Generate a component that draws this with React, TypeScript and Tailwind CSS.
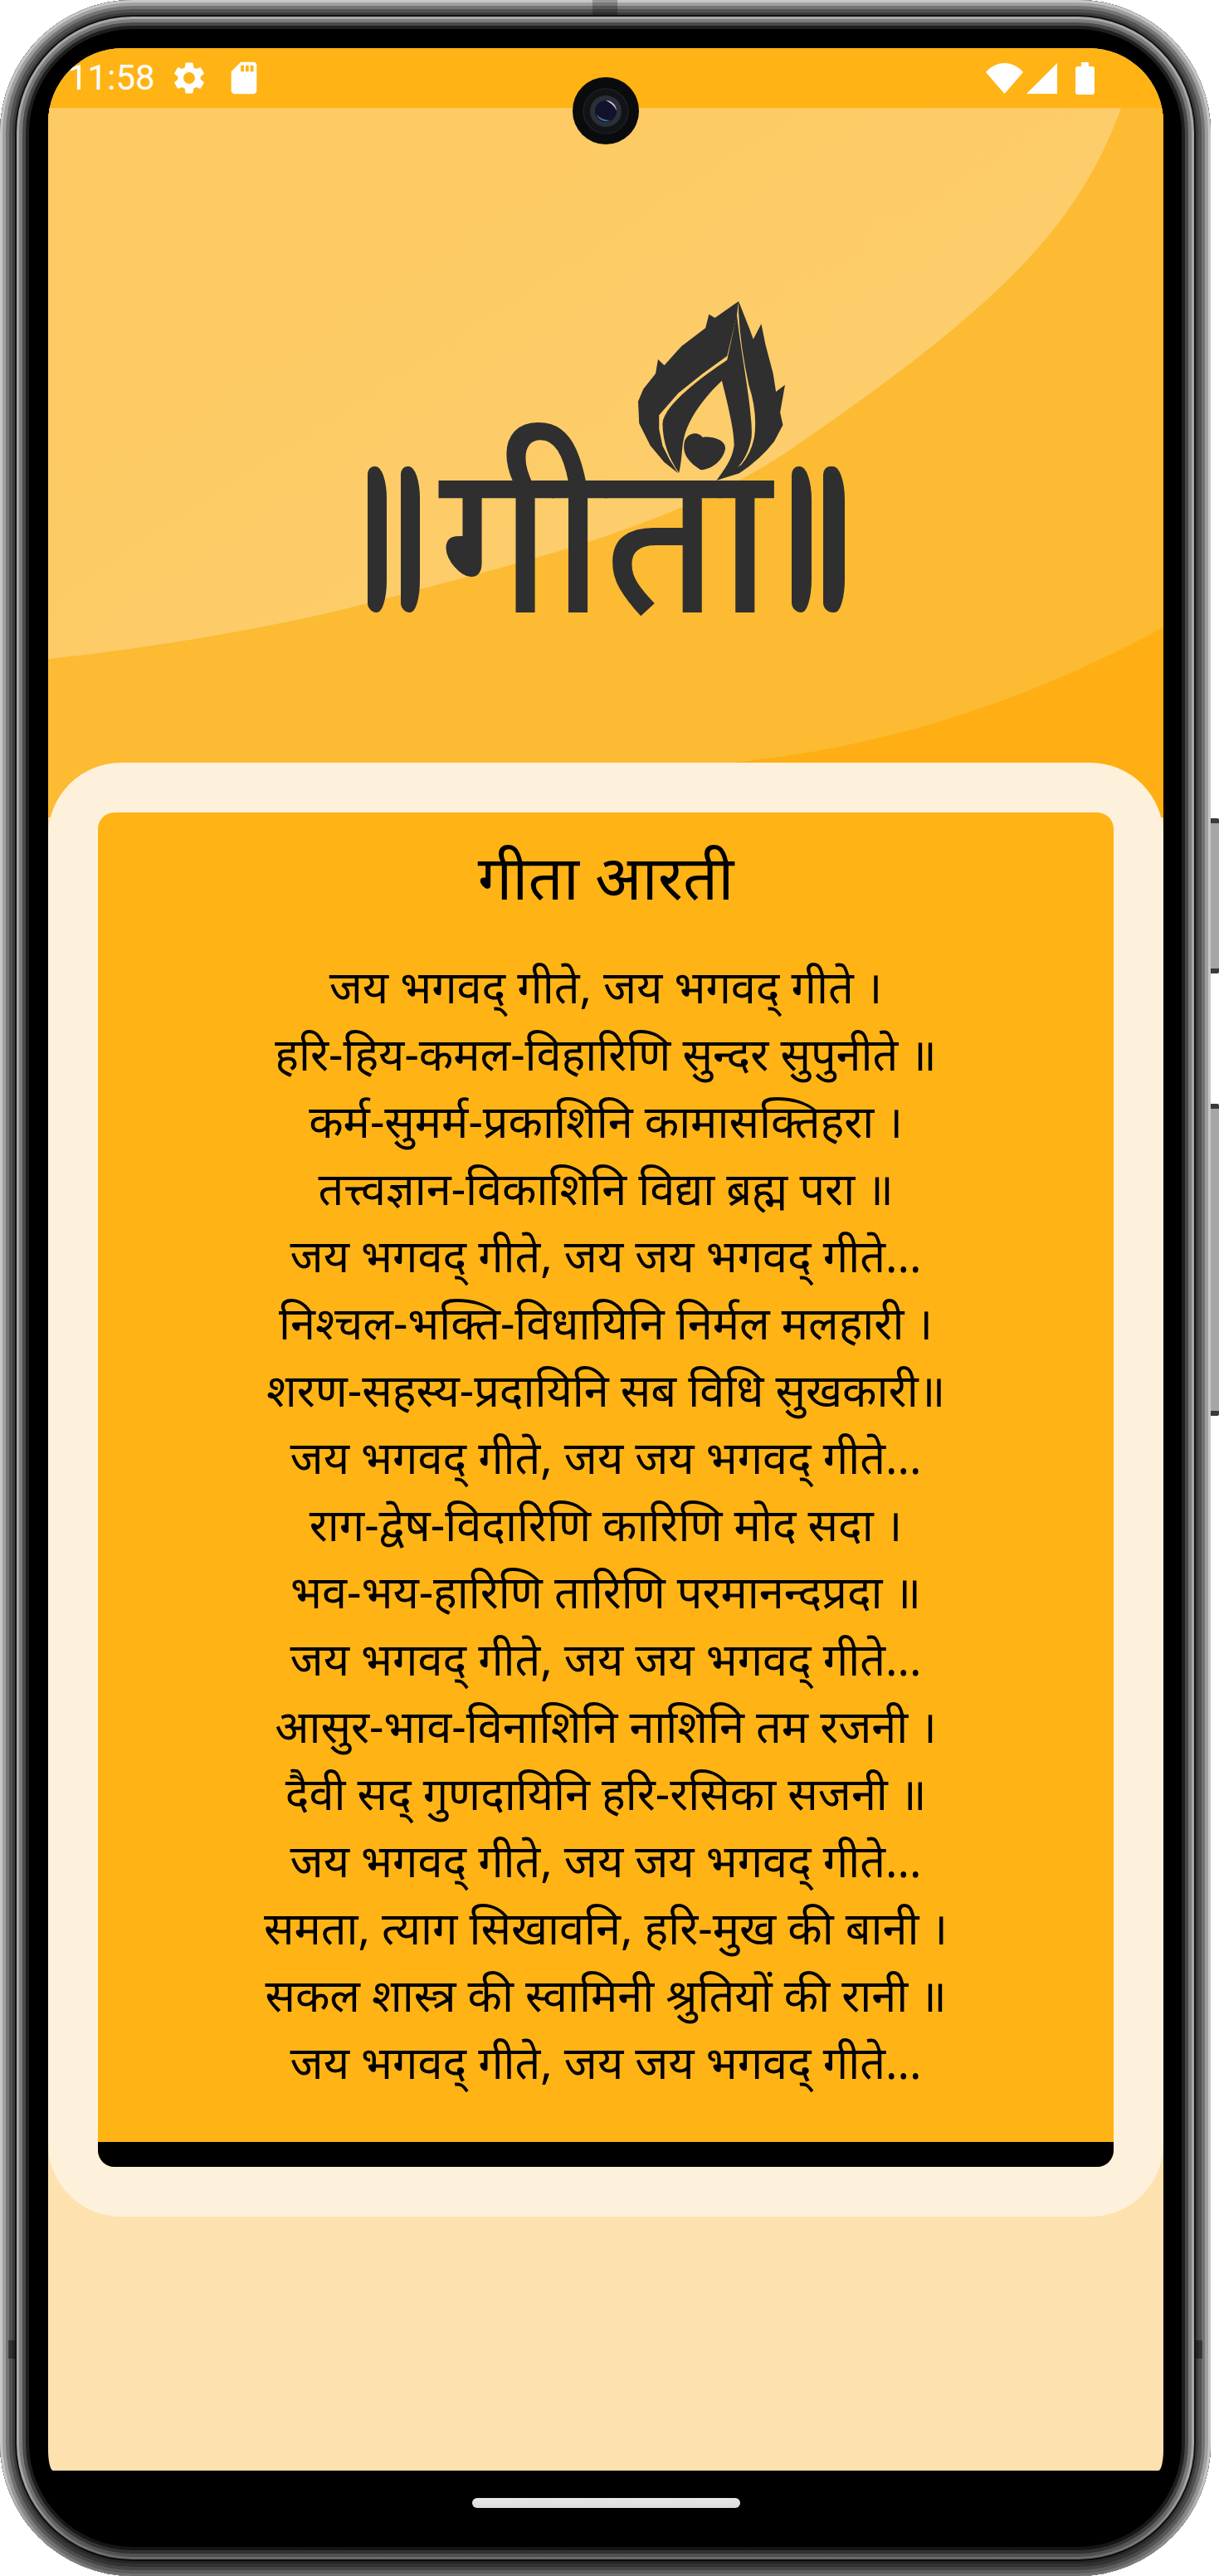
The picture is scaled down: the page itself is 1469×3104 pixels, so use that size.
import { MdSettings, MdSdStorage } from 'react-icons/md';

const chorus = 'जय भगवद् गीते, जय जय भगवद् गीते...';

const lines = [
  'जय भगवद् गीते, जय भगवद् गीते ।',
  'हरि-हिय-कमल-विहारिणि सुन्दर सुपुनीते ॥',
  'कर्म-सुमर्म-प्रकाशिनि कामासक्तिहरा ।',
  'तत्त्वज्ञान-विकाशिनि विद्या ब्रह्म परा ॥',
  chorus,
  'निश्चल-भक्ति-विधायिनि निर्मल मलहारी ।',
  'शरण-सहस्य-प्रदायिनि सब विधि सुखकारी॥',
  chorus,
  'राग-द्वेष-विदारिणि कारिणि मोद सदा ।',
  'भव-भय-हारिणि तारिणि परमानन्दप्रदा ॥',
  chorus,
  'आसुर-भाव-विनाशिनि नाशिनि तम रजनी ।',
  'दैवी सद् गुणदायिनि हरि-रसिका सजनी ॥',
  chorus,
  'समता, त्याग सिखावनि, हरि-मुख की बानी ।',
  'सकल शास्त्र की स्वामिनी श्रुतियों की रानी ॥',
  chorus,
];

function StatusBar() {
  return (
    <div className="flex h-[72px] shrink-0 items-center bg-[#ffb315] pl-[24px] pr-[83px] text-white">
      <span className="font-['Roboto',sans-serif] text-[42px] leading-none">11:58</span>
      <MdSettings className="ml-[18px] h-[46px] w-[46px]" />
      <MdSdStorage className="ml-[20px] h-[46px] w-[46px]" />
      <div className="ml-auto flex items-center">
        <svg width="45" height="37" viewBox="0 0 45 37" fill="#fff">
          <path d="M0 11 C6 4 14 0 22.5 0 C31 0 39 4 45 11 L22.5 37 Z" />
        </svg>
        <svg className="ml-[4px]" width="37" height="37" viewBox="0 0 37 37" fill="#fff">
          <path d="M0 37 L37 0 V37 Z" />
        </svg>
        <svg className="ml-[22px]" width="23" height="39" viewBox="0 0 23 39" fill="#fff">
          <path d="M7 0 H16 V5 H20 Q23 5 23 8 V36 Q23 39 20 39 H3 Q0 39 0 36 V8 Q0 5 3 5 H7 Z" />
        </svg>
      </div>
    </div>
  );
}

function Flame() {
  return (
    <svg
      className="absolute left-[326px] top-0"
      width="177"
      height="216"
      viewBox="875 68 421 648"
      preserveAspectRatio="none"
      fill="#2f2f2f"
    >
      <path d="M1163 68 L1195 170 L1205 205 L1228 150 L1240 225 L1262 330 L1270 395 L1296 370 L1282 470 L1290 515 L1265 575 Q1225 640 1165 690 L1100 715 L1170 660 Q1198 620 1208 560 Q1218 470 1192 370 Q1168 230 1163 110 Z" />
      <path d="M1163 68 L1095 128 L1078 115 L1068 165 L1000 230 L985 250 L950 300 L932 278 L925 330 L890 385 L875 430 L878 510 L910 590 L950 650 L990 690 L965 640 L945 590 L935 530 L935 480 L990 400 L1060 330 L1130 266 L1158 120 Z" />
      <path d="M1130 280 C1060 340 950 440 945 510 C945 580 965 640 992 688 C1000 650 1000 600 1005 570 C1015 500 1060 420 1115 355 C1130 430 1150 530 1150 590 C1145 640 1120 680 1100 715 C1150 700 1190 640 1200 560 C1205 470 1170 260 1158 115 Z" />
      <path d="M1055 678 C1020 650 1000 620 1008 575 C1015 545 1045 535 1060 560 C1080 555 1125 565 1125 600 C1120 640 1090 675 1055 678 Z" />
    </svg>
  );
}

function Logo() {
  return (
    <div className="relative flex h-[375px] w-[575px] items-end font-['Noto_Sans',sans-serif] text-[#2f2f2f]">
      <Flame />
      <div className="h-[176px] w-[23px] rounded-[8px_14px_12px_12px/10px_40px_40px_12px] bg-[#2f2f2f]" />
      <div className="ml-[17px] h-[176px] w-[23px] rounded-[8px_14px_12px_12px/10px_40px_40px_12px] bg-[#2f2f2f]" />
      <div className="-mb-[29px] ml-[21px] flex w-[404px] justify-center">
        <span className="scale-x-[0.92] whitespace-nowrap text-[256px] font-medium leading-[256px]">गीता</span>
      </div>
      <div className="ml-[23px] h-[176px] w-[24px] rounded-[8px_14px_12px_12px/10px_40px_40px_12px] bg-[#2f2f2f]" />
      <div className="ml-[14px] h-[176px] w-[26px] rounded-[8px_14px_12px_12px/10px_40px_40px_12px] bg-[#2f2f2f]" />
    </div>
  );
}

function HeroBackground() {
  return (
    <svg className="absolute inset-0" width="1344" height="855" viewBox="0 0 1344 855">
      <defs>
        <linearGradient id="lightBand" gradientUnits="userSpaceOnUse" x1="500" y1="100" x2="800" y2="560">
          <stop offset="0" stopColor="#fdca63" />
          <stop offset="1" stopColor="#fdce6e" />
        </linearGradient>
      </defs>
      <rect width="1344" height="855" fill="#ffae13" />
      <path d="M0 0 H1344 V626 C1180 715 1020 765 859 785 C600 820 300 840 0 855 Z" fill="#fcbb33" />
      <path
        d="M0 0 H1293 C1240 150 1130 250 894 412 C760 504 560 550 400 593 C280 625 130 650 0 664 Z"
        fill="url(#lightBand)"
      />
    </svg>
  );
}

function Camera() {
  return (
    <div className="absolute left-[690px] top-[93px] flex h-[81px] w-[80px] items-center justify-center rounded-full bg-[#0a0b0d]">
      <svg width="56" height="56" viewBox="0 0 56 56">
        <circle cx="28" cy="28" r="27" fill="#111317" stroke="#1c1f24" strokeWidth="1.5" />
        <circle cx="28" cy="28" r="19" fill="#2a3037" />
        <circle cx="28" cy="28" r="13" fill="#14112c" />
        <path d="M28 15 A13 13 0 0 1 41 27 Q37 19 28 15 Z" fill="#d9bce6" />
        <path d="M17 32 A12 12 0 0 0 33 39 Q23 39 17 32 Z" fill="#3c8198" />
      </svg>
    </div>
  );
}

export default function App() {
  return (
    <div className="relative h-[3104px] w-[1469px] overflow-hidden bg-white">
      {/* volume and power keys */}
      <div className="absolute left-[1459px] top-[986px] h-[187px] w-[10px] rounded-r-[2px] border-y-[6px] border-y-[#3a3a3a] bg-[#a6a6a6]" />
      <div className="absolute left-[1459px] top-[1330px] h-[376px] w-[10px] rounded-r-[2px] border-y-[6px] border-y-[#3a3a3a] bg-[#a6a6a6]" />

      <div className="flex h-full w-[1459px] flex-col rounded-[160px] bg-black pl-[58px] pr-[57px] pt-[58px] shadow-[inset_0_0_0_3px_#c8c8c8,inset_0_0_0_7px_#a0a0a0,inset_0_0_0_11px_#747474,inset_0_0_0_15px_#525252,inset_0_0_0_18px_#3c3c3c,inset_0_0_0_20px_#111111,inset_0_0_0_23px_#a8a8a8,inset_0_0_0_27px_#7c7c7c,inset_0_0_0_31px_#4a4a4a,inset_0_0_0_35px_#1e1e1e]">
        <div className="flex h-[2919px] shrink-0 flex-col overflow-hidden rounded-t-[90px] rounded-b-[6px_25px] bg-[#fde2b0]">
          <StatusBar />

          <div className="relative flex h-[855px] shrink-0 flex-col items-center pt-[233px]">
            <HeroBackground />
            <Logo />
          </div>

          <div className="relative -mt-[66px] h-[1752px] shrink-0 rounded-[88px] bg-[#fef1db] px-[60px] py-[60px]">
            <div className="flex h-full flex-col overflow-hidden rounded-[20px] bg-[#ffb315] text-center font-['Noto_Sans',sans-serif] text-black">
              <h1 className="pt-[32px] text-[74px] leading-[90px]">गीता आरती</h1>
              <div className="mt-[47px] flex-1 text-[54px] leading-[81px]">
                {lines.map((line, i) => (
                  <p key={i}>{line}</p>
                ))}
              </div>
              <div className="h-[30px] shrink-0 bg-black" />
            </div>
          </div>
        </div>

        <div className="mx-auto mt-[33px] h-[12px] w-[323px] rounded-full bg-white" />
      </div>

      {/* the lower edge of the frame sits in shadow */}
      <div className="absolute bottom-0 left-0 h-[170px] w-[1459px] rounded-b-[160px] bg-[linear-gradient(to_bottom,transparent_30%,rgba(0,0,0,0.45))]" />

      {/* antenna lines in the frame */}
      <div className="absolute left-[714px] top-0 h-[18px] w-[30px] bg-black/25" />
      <div className="absolute left-[10px] top-[2820px] h-[22px] w-[8px] bg-black/40" />
      <div className="absolute left-[1441px] top-[2820px] h-[22px] w-[8px] bg-black/40" />

      <Camera />
    </div>
  );
}
